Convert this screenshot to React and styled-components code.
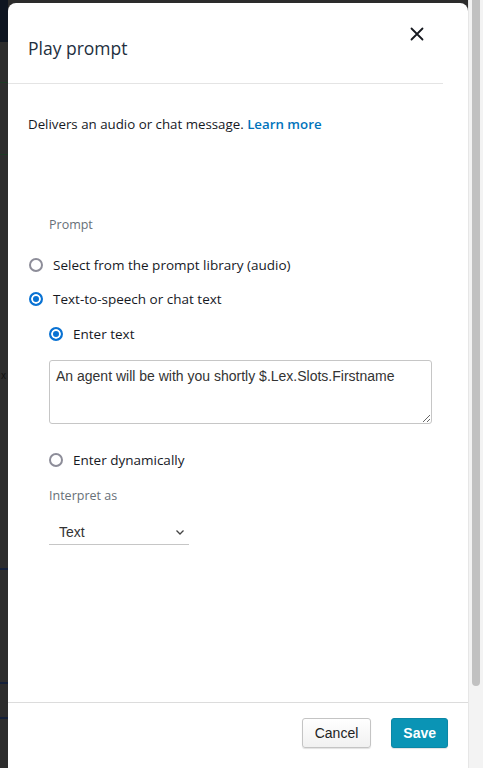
import styled, { createGlobalStyle } from "styled-components";

const GlobalStyle = createGlobalStyle`
  html, body {
    margin: 0;
    padding: 0;
    width: 483px;
    height: 768px;
    overflow: hidden;
    background: #2c2c2c;
    font-family: "Open Sans", "Noto Sans", sans-serif;
    color: #16191f;
  }
`;

const Screen = styled.div`
  display: flex;
  width: 483px;
  height: 768px;
`;

const Backdrop = styled.div`
  position: relative;
  width: 8px;
  flex-shrink: 0;
  background: linear-gradient(
    to bottom,
    #0e1520 0,
    #0e1520 42px,
    #2d2d2d 42px,
    #2d2d2d 82px,
    #1d3a25 82px,
    #1d3a25 83px,
    #2d2d2d 83px,
    #2d2d2d 154px,
    #1d3a25 154px,
    #1d3a25 155px,
    #2d2d2d 155px,
    #2d2d2d 568px,
    #14203a 568px,
    #14203a 570px,
    #2d2d2d 570px,
    #2d2d2d 682px,
    #14203a 682px,
    #14203a 684px,
    #2d2d2d 684px,
    #2d2d2d 717px,
    #14203a 717px,
    #14203a 719px,
    #2d2d2d 719px
  );
  font-family: "Liberation Sans", sans-serif;
  font-size: 10px;
  color: #111;
`;

const StrayMark = styled.span`
  position: absolute;
  top: 370px;
  left: 1px;
`;

const Panel = styled.div`
  flex: 1;
  margin-top: 3px;
  background: #fff;
  border-radius: 8px 8px 0 0;
  display: flex;
  flex-direction: column;
`;

const Header = styled.header`
  display: flex;
  justify-content: space-between;
  align-items: flex-start;
  height: 80px;
  margin-right: 25px;
  padding: 0 14px 0 20px;
  border-bottom: 1px solid #e4e4e4;
`;

const Title = styled.h2`
  margin: 33px 0 0;
  font-size: 17.5px;
  line-height: 24px;
  font-weight: 400;
  color: #232f3e;
`;

const CloseButton = styled.button`
  margin-top: 19px;
  width: 24px;
  height: 24px;
  padding: 0;
  border: none;
  background: none;
  display: flex;
  align-items: center;
  justify-content: center;
  color: #16191f;
`;

const Body = styled.main`
  flex: 1;
  display: flex;
  flex-direction: column;
`;

const Description = styled.p`
  margin: 30px 0 0 20px;
  font-size: 13.3px;
  line-height: 20px;
  color: #16191f;

  a {
    color: #0073bb;
    font-weight: 600;
    text-decoration: none;
  }
`;

const FieldLabel = styled.div`
  margin: ${(p) => p.$top}px 0 0 41px;
  font-size: 12.5px;
  line-height: 18px;
  color: #687078;
`;

const RadioRow = styled.label`
  display: flex;
  align-items: center;
  gap: 10px;
  height: 20px;
  margin: ${(p) => p.$top}px 0 0 ${(p) => p.$indent}px;
  font-size: 13.5px;
  line-height: 20px;
  color: #16191f;
`;

const RadioDot = styled.span`
  box-sizing: border-box;
  width: 14px;
  height: 14px;
  border-radius: 50%;
  flex-shrink: 0;
  border: 2px solid ${(p) => (p.$checked ? "#0972d3" : "#8d8d99")};
  background: ${(p) => (p.$checked ? "#0972d3" : "#fff")};
  box-shadow: ${(p) => (p.$checked ? "inset 0 0 0 2px #fff" : "none")};
`;

const TextArea = styled.textarea`
  box-sizing: border-box;
  display: block;
  margin: 16px 0 0 41px;
  width: 383px;
  height: 64px;
  padding: 6px 6px;
  border: 1px solid #c6c6c6;
  border-radius: 3px;
  font-family: "Liberation Sans", Arial, sans-serif;
  font-size: 14px;
  line-height: 18px;
  color: #333;
  resize: both;
  outline: none;
`;

const Select = styled.div`
  box-sizing: border-box;
  display: flex;
  align-items: center;
  justify-content: space-between;
  margin: 15px 0 0 41px;
  width: 140px;
  height: 25px;
  padding: 0 4px 0 10px;
  border-bottom: 1px solid #c6c6c6;
  font-family: "Liberation Sans", Arial, sans-serif;
  font-size: 14px;
  color: #333;
`;

const Footer = styled.footer`
  display: flex;
  justify-content: flex-end;
  gap: 20px;
  height: 66px;
  padding: 15px 20px 0 0;
  box-sizing: border-box;
  border-top: 1px solid #dcdcdc;
`;

const Button = styled.button`
  height: 30px;
  padding: 0 ${(p) => (p.$primary ? 11 : 12)}px;
  border-radius: 3px;
  font-family: "Liberation Sans", Arial, sans-serif;
  font-size: 14px;
  border: 1px solid ${(p) => (p.$primary ? "#0b87a6" : "#c4c4c4")};
  background: ${(p) =>
    p.$primary ? "#0a94b5" : "linear-gradient(#ffffff, #f1f1f1)"};
  color: ${(p) => (p.$primary ? "#fff" : "#222")};
  font-weight: ${(p) => (p.$primary ? 600 : 400)};
  box-shadow: 0 1px 1px rgba(0, 0, 0, 0.12);
`;

const ScrollTrack = styled.div`
  width: 15px;
  flex-shrink: 0;
  background: #f3f3f3;
  border-left: 1px solid #e6e6e6;
  box-sizing: border-box;
  padding: 0 3px 0 3px;
`;

const ScrollThumb = styled.div`
  height: 686px;
  background: #c1c1c1;
  border-radius: 0 0 4px 4px;
`;

export default function App() {
  return (
    <>
      <GlobalStyle />
      <Screen>
        <Backdrop>
          <StrayMark>x</StrayMark>
        </Backdrop>
        <Panel>
          <Header>
            <Title>Play prompt</Title>
            <CloseButton aria-label="Close">
              <svg width="14" height="14" viewBox="0 0 14 14">
                <path
                  d="M1.5 1.5 L12.5 12.5 M12.5 1.5 L1.5 12.5"
                  stroke="#16191f"
                  strokeWidth="1.8"
                  strokeLinecap="round"
                />
              </svg>
            </CloseButton>
          </Header>
          <Body>
            <Description>
              Delivers an audio or chat message. <a href="#">Learn more</a>
            </Description>
            <FieldLabel $top={82}>Prompt</FieldLabel>
            <RadioRow $top={21} $indent={21}>
              <RadioDot />
              Select from the prompt library (audio)
            </RadioRow>
            <RadioRow $top={14} $indent={21}>
              <RadioDot $checked />
              Text-to-speech or chat text
            </RadioRow>
            <RadioRow $top={15} $indent={41}>
              <RadioDot $checked />
              Enter text
            </RadioRow>
            <TextArea defaultValue="An agent will be with you shortly $.Lex.Slots.Firstname" />
            <RadioRow $top={26} $indent={41}>
              <RadioDot />
              Enter dynamically
            </RadioRow>
            <FieldLabel $top={17}>Interpret as</FieldLabel>
            <Select>
              Text
              <svg width="10" height="10" viewBox="0 0 10 10">
                <path
                  d="M1.5 3.5 L5 7 L8.5 3.5"
                  fill="none"
                  stroke="#444"
                  strokeWidth="1.3"
                />
              </svg>
            </Select>
          </Body>
          <Footer>
            <Button>Cancel</Button>
            <Button $primary>Save</Button>
          </Footer>
        </Panel>
        <ScrollTrack>
          <ScrollThumb />
        </ScrollTrack>
      </Screen>
    </>
  );
}
